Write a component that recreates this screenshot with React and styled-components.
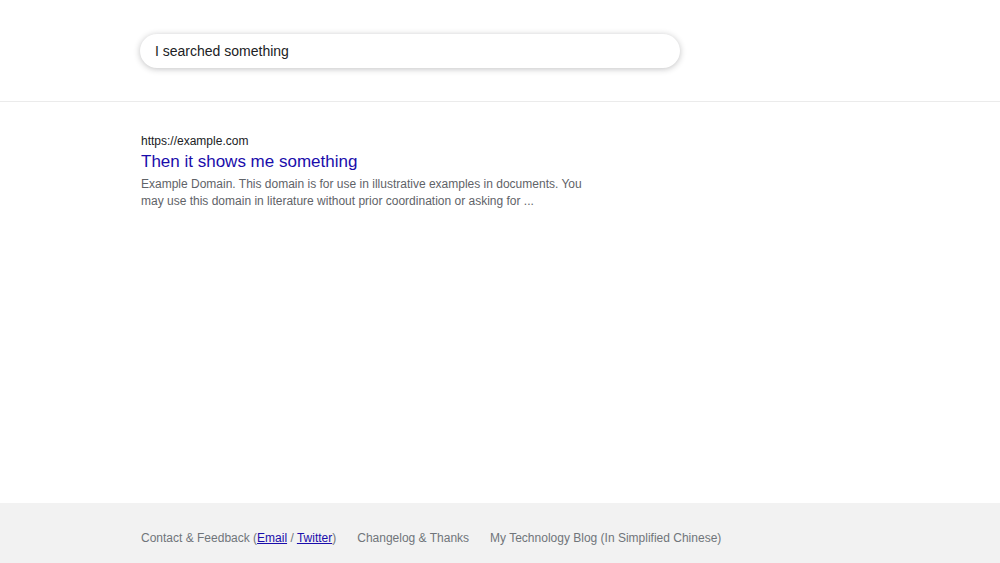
import React from 'react';
import styled, { createGlobalStyle } from 'styled-components';

const Global = createGlobalStyle`
  html, body { margin: 0; height: 100%; }
  body { font-family: "Liberation Sans", Arial, sans-serif; background: #fff; }
  #root { height: 100%; }
`;

const Page = styled.div`
  display: flex;
  flex-direction: column;
  height: 563px;
`;

const Header = styled.header`
  height: 102px;
  border-bottom: 1px solid #ebebeb;
  padding: 34px 0 0 140px;
  box-sizing: border-box;
`;

const SearchBox = styled.div`
  width: 540px;
  height: 34px;
  border-radius: 17px;
  box-shadow: 0 1px 6px rgba(32, 33, 36, 0.28);
  display: flex;
  align-items: center;
  padding: 0 15px;
  box-sizing: border-box;
  font-size: 14px;
  color: #202124;
`;

const Main = styled.main`
  flex: 1;
  padding: 31px 0 0 141px;
`;

const Url = styled.div`
  font-size: 12px;
  line-height: 16px;
  color: #202124;
`;

const Title = styled.a`
  display: block;
  font-size: 17px;
  line-height: 24px;
  margin-top: 1px;
  color: #1a0dab;
  text-decoration: none;
`;

const Snippet = styled.p`
  margin: 2px 0 0;
  width: 460px;
  font-size: 12px;
  line-height: 17px;
  color: #5f6368;
`;

const Footer = styled.footer`
  height: 60px;
  background: #f2f2f2;
  display: flex;
  align-items: center;
  gap: 21px;
  padding: 10px 0 0 141px;
  box-sizing: border-box;
  font-size: 12px;
  color: #70757a;
`;

const Link = styled.a`
  color: #1a0dab;
  text-decoration: underline;
`;

export default function App() {
  return (
    <Page>
      <Global />
      <Header>
        <SearchBox>I searched something</SearchBox>
      </Header>
      <Main>
        <Url>https://example.com</Url>
        <Title href="#">Then it shows me something</Title>
        <Snippet>
          Example Domain. This domain is for use in illustrative examples in documents. You may use
          this domain in literature without prior coordination or asking for ...
        </Snippet>
      </Main>
      <Footer>
        <span>Contact &amp; Feedback (<Link href="#">Email</Link> / <Link href="#">Twitter</Link>)</span>
        <span>Changelog &amp; Thanks</span>
        <span>My Technology Blog (In Simplified Chinese)</span>
      </Footer>
    </Page>
  );
}
